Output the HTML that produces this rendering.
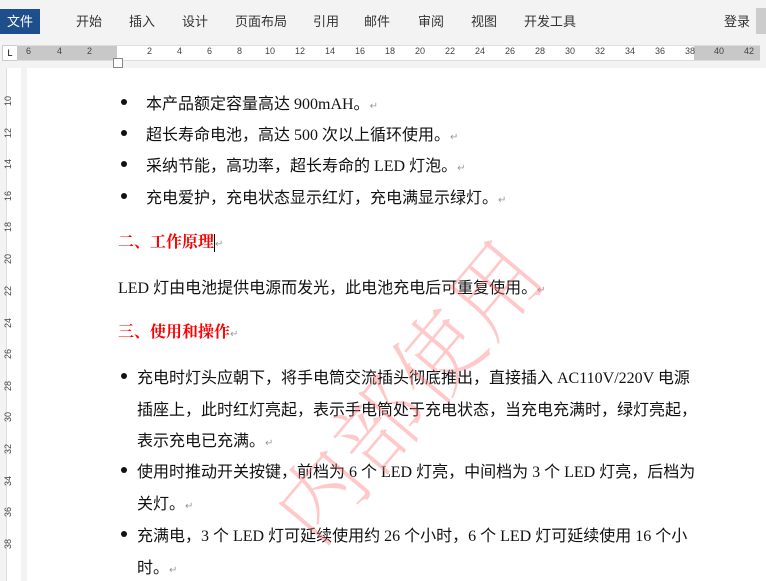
<!DOCTYPE html>
<html><head><meta charset="utf-8"><style>
body{margin:0;width:766px;height:581px;overflow:hidden;background:#fff;font-family:"Liberation Serif","Noto Sans CJK SC",sans-serif;position:relative}
.tabs{position:absolute;left:0;top:0;width:766px;height:44px;background:#f3f3f3}
.tab{position:absolute;top:11px;font:13px "Liberation Sans","Noto Sans CJK SC",sans-serif;color:#333}
.file{position:absolute;left:0;top:9px;width:40px;height:25px;background:#1e4e8c;color:#fff;font:13px "Liberation Sans","Noto Sans CJK SC",sans-serif;text-align:center;line-height:25px}
.rulerbar{position:absolute;left:0;top:44px;width:766px;height:24px;background:#f3f3f3}
.ruler{position:absolute;left:17px;top:45px;width:743px;height:14px;background:#c8c8c8;border-top:1px solid #ddd;border-bottom:1px solid #ddd}
.rw{position:absolute;left:117px;top:45px;width:577px;height:14px;background:#fff;border-top:1px solid #ddd;border-bottom:1px solid #ddd}
.rn{position:absolute;top:46px;font:9px "Liberation Sans",sans-serif;color:#444}
.vr{position:absolute;left:0;top:68px;width:22px;height:513px;background:#f3f3f3}
.vrw{position:absolute;left:6px;top:68px;width:14px;height:513px;background:#fff;border-left:1px solid #ddd}
.vn{position:absolute;left:3px;font:9px "Liberation Sans",sans-serif;color:#444;transform:rotate(-90deg)}
.t{position:absolute;font-size:16px;color:#111;white-space:nowrap}
.b{position:absolute;left:121px;width:6px;height:6px;border-radius:50%;background:#111}
.h{position:absolute;left:118px;color:#f00;font-weight:bold;font-size:16px;font-family:"Liberation Serif","Noto Serif CJK SC",serif}
.m{color:#999;font-size:10px}
.wm{position:absolute;left:225px;top:325px;font:200 88px "Noto Serif CJK SC",serif;color:rgba(255,120,120,.4);transform:rotate(-50deg);white-space:nowrap;letter-spacing:2px}
</style></head><body>
<div class="tabs"></div>
<div class="file">文件</div>
<div class="tab" style="left:76px">开始</div><div class="tab" style="left:129px">插入</div><div class="tab" style="left:182px">设计</div><div class="tab" style="left:235px">页面布局</div><div class="tab" style="left:313px">引用</div><div class="tab" style="left:364px">邮件</div><div class="tab" style="left:418px">审阅</div><div class="tab" style="left:471px">视图</div><div class="tab" style="left:524px">开发工具</div><div class="tab" style="left:724px">登录</div>
<div style="position:absolute;left:756px;top:8px;width:10px;height:26px;background:#ccc"></div>
<div class="rulerbar"></div>
<div style="position:absolute;left:2px;top:45px;width:14px;height:14px;background:#fff;border:1px solid #ccc;font:9px 'Liberation Sans';text-align:center;line-height:14px">L</div>
<div class="ruler"></div><div class="rw"></div>
<div class="rn" style="left:26px">6</div><div class="rn" style="left:57px">4</div><div class="rn" style="left:87px">2</div>
<div class="rn" style="left:147px">2</div><div class="rn" style="left:177px">4</div><div class="rn" style="left:207px">6</div><div class="rn" style="left:237px">8</div><div class="rn" style="left:265px">10</div><div class="rn" style="left:295px">12</div><div class="rn" style="left:325px">14</div><div class="rn" style="left:355px">16</div><div class="rn" style="left:385px">18</div><div class="rn" style="left:415px">20</div><div class="rn" style="left:445px">22</div><div class="rn" style="left:475px">24</div><div class="rn" style="left:505px">26</div><div class="rn" style="left:535px">28</div><div class="rn" style="left:565px">30</div><div class="rn" style="left:595px">32</div><div class="rn" style="left:625px">34</div><div class="rn" style="left:655px">36</div><div class="rn" style="left:685px">38</div><div class="rn" style="left:714px">40</div><div class="rn" style="left:744px">42</div>
<div style="position:absolute;left:113px;top:58px;width:8px;height:8px;border:1px solid #888;background:#fff"></div>
<div class="vr"></div><div class="vrw"></div>
<div class="vn" style="top:96px">10</div><div class="vn" style="top:128px">12</div><div class="vn" style="top:159px">14</div><div class="vn" style="top:191px">16</div><div class="vn" style="top:222px">18</div><div class="vn" style="top:254px">20</div><div class="vn" style="top:286px">22</div><div class="vn" style="top:318px">24</div><div class="vn" style="top:349px">26</div><div class="vn" style="top:381px">28</div><div class="vn" style="top:412px">30</div><div class="vn" style="top:444px">32</div><div class="vn" style="top:476px">34</div><div class="vn" style="top:507px">36</div><div class="vn" style="top:539px">38</div>
<div style="position:absolute;left:22px;top:68px;width:5px;height:513px;background:#f3f3f3"></div>

<div class="b" style="top:99px"></div><div class="t" style="left:146px;top:90px">本产品额定容量高达 900mAH。<span class="m">↵</span></div>
<div class="b" style="top:130px"></div><div class="t" style="left:146px;top:121px">超长寿命电池，高达 500 次以上循环使用。<span class="m">↵</span></div>
<div class="b" style="top:161px"></div><div class="t" style="left:146px;top:152px">采纳节能，高功率，超长寿命的 LED 灯泡。<span class="m">↵</span></div>
<div class="b" style="top:193px"></div><div class="t" style="left:146px;top:184px">充电爱护，充电状态显示红灯，充电满显示绿灯。<span class="m">↵</span></div>
<div class="h" style="top:229px">二、工作原理<span style="display:inline-block;width:1px;height:18px;background:#000;vertical-align:middle"></span><span class="m" style="font-weight:normal">↵</span></div>
<div class="t" style="left:118px;top:274px">LED 灯由电池提供电源而发光，此电池充电后可重复使用。<span class="m">↵</span></div>
<div class="h" style="top:319px">三、使用和操作<span class="m" style="font-weight:normal">↵</span></div>
<div class="b" style="top:373px"></div><div class="t" style="left:137px;top:364px">充电时灯头应朝下，将手电筒交流插头彻底推出，直接插入 AC110V/220V 电源</div>
<div class="t" style="left:137px;top:396px">插座上，此时红灯亮起，表示手电筒处于充电状态，当充电充满时，绿灯亮起，</div>
<div class="t" style="left:137px;top:427px">表示充电已充满。<span class="m">↵</span></div>
<div class="b" style="top:467px"></div><div class="t" style="left:137px;top:458px">使用时推动开关按键，前档为 6 个 LED 灯亮，中间档为 3 个 LED 灯亮，后档为</div>
<div class="t" style="left:137px;top:490px">关灯。<span class="m">↵</span></div>
<div class="b" style="top:531px"></div><div class="t" style="left:137px;top:522px">充满电，3 个 LED 灯可延续使用约 26 个小时，6 个 LED 灯可延续使用 16 个小</div>
<div class="t" style="left:137px;top:554px">时。<span class="m">↵</span></div>
<div class="wm">内部使用</div>
</body></html>
